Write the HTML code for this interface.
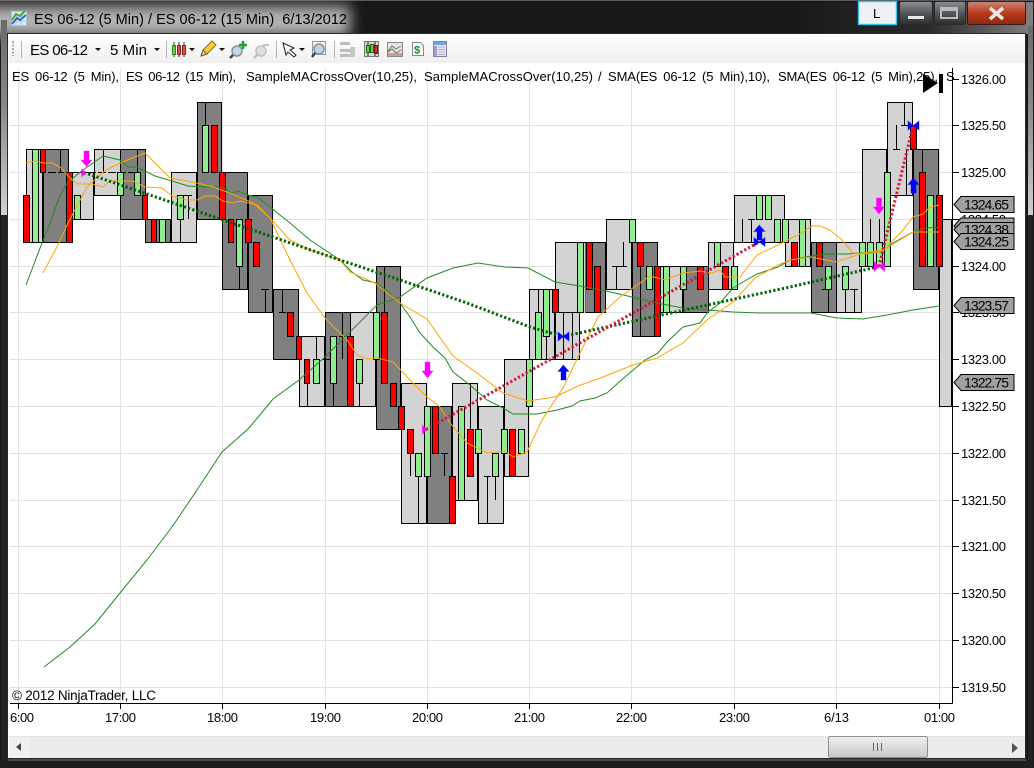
<!DOCTYPE html>
<html><head><meta charset="utf-8"><title>ES 06-12</title>
<style>
html,body{margin:0;padding:0;background:#202020;width:1034px;height:768px;overflow:hidden}
svg{display:block}
text{font-family:"Liberation Sans",Arial,sans-serif;fill:#000}
.ax text{font-size:13px}
.fl polygon{fill:#a0a0a0;stroke:#000}
.fl text{font-size:14px}
.lg text{font-size:13px;word-spacing:2.5px}
</style></head><body>
<svg width="1034" height="768" viewBox="0 0 1034 768" xmlns="http://www.w3.org/2000/svg">
<defs>
<filter id="b" x="-20%" y="-80%" width="140%" height="260%"><feGaussianBlur stdDeviation="7"/></filter>
<linearGradient id="side" x1="0" y1="0" x2="0" y2="1"><stop offset="0" stop-color="#6a6a6a"/><stop offset=".45" stop-color="#8a8a8a"/><stop offset="1" stop-color="#d0d0d0"/></linearGradient>
<linearGradient id="tr" x1="0" y1="0" x2="1" y2="0"><stop offset="0" stop-color="#1a1a1a"/><stop offset=".55" stop-color="#2a2a2a"/><stop offset="1" stop-color="#808080"/></linearGradient>
<linearGradient id="tb" x1="0" y1="0" x2="0" y2="1"><stop offset="0" stop-color="#fff"/><stop offset="1" stop-color="#efefef"/></linearGradient>
<linearGradient id="mn" x1="0" y1="0" x2="0" y2="1"><stop offset="0" stop-color="#8b8f92"/><stop offset=".5" stop-color="#55585b"/><stop offset="1" stop-color="#2a2c2e"/></linearGradient>
<linearGradient id="cl" x1="0" y1="0" x2="0" y2="1"><stop offset="0" stop-color="#c98a7a"/><stop offset=".5" stop-color="#bb3a1c"/><stop offset="1" stop-color="#8c2812"/></linearGradient>
<linearGradient id="th" x1="0" y1="0" x2="0" y2="1"><stop offset="0" stop-color="#f0f0f0"/><stop offset=".5" stop-color="#dcdcdc"/><stop offset="1" stop-color="#c8c8c8"/></linearGradient>
<clipPath id="cp"><rect x="9" y="64" width="1017" height="672"/></clipPath>
</defs>

<!-- window frame -->
<rect width="1034" height="768" fill="#1c1c1c"/>
<path d="M0 768V6Q0 0 6 0H1028Q1034 0 1034 6V768Z" fill="#171717"/>
<rect x="0" y="0" width="1034" height="1" fill="#5a5a5a"/>
<rect x="800" y="2" width="233" height="32" fill="url(#tr)"/>
<rect x="-20" y="6" width="370" height="30" fill="#b4b4b4" filter="url(#b)"/>
<rect x="1" y="20" width="6" height="195" fill="url(#side)"/>
<rect x="1" y="215" width="6" height="545" fill="#232323"/>
<rect x="1028" y="26" width="5" height="189" fill="url(#side)"/>
<rect x="1028" y="215" width="5" height="545" fill="#232323"/>
<rect x="0" y="760" width="1034" height="8" fill="#1e1e1e"/>
<rect x="7.5" y="33.5" width="1018" height="725" fill="#fff" stroke="#2a2a2a"/>
<rect x="8" y="759.500" width="1018" height="1" fill="#777"/>

<!-- title -->
<g>
<rect x="11" y="11" width="16" height="15" fill="#dde6f0" stroke="#8fa6c0"/>
<path d="M11 16H27M11 21H27M16 11V26M21 11V26" stroke="#b5c5d8" fill="none"/>
<path d="M12 24L17 18L20 20L26 15" stroke="#2a6fd0" stroke-width="2" fill="none"/>
<path d="M12 20L16 14L20 16L25 11" stroke="#4fa83a" stroke-width="2" fill="none"/>
</g>
<text x="34" y="24" font-size="14.5" textLength="313" lengthAdjust="spacing" xml:space="preserve">ES 06-12 (5 Min) / ES 06-12 (15 Min)  6/13/2012</text>

<!-- caption buttons -->
<rect x="858.5" y="1.5" width="38" height="23" fill="#eef1f5" stroke="#35c4ee" stroke-width="1.4"/>
<text x="873" y="18" font-size="13">L</text>
<rect x="899.5" y="1.5" width="33" height="23" rx="2" fill="url(#mn)" stroke="#2b2b2b"/>
<rect x="908" y="16" width="16" height="3" fill="#e8e8e8"/>
<rect x="934.5" y="1.5" width="31" height="23" rx="2" fill="url(#mn)" stroke="#2b2b2b"/>
<rect x="941" y="8" width="16" height="10" fill="none" stroke="#b8bcc0" stroke-width="2"/>
<rect x="941" y="8" width="16" height="3" fill="#b8bcc0"/>
<rect x="967.5" y="1.5" width="58" height="23" rx="2" fill="url(#cl)" stroke="#3a1a12"/>
<path d="M990 8L1003 19M1003 8L990 19" stroke="#e8e4e0" stroke-width="3.6" fill="none"/>

<!-- toolbar -->
<rect x="9" y="35" width="1016" height="28" fill="url(#tb)"/>
<path d="M13 41V56" stroke="#aaa" stroke-width="2" stroke-dasharray="2 1.5"/>
<path d="M21.5 41V58M166.5 41V58M276.5 41V58M334.5 41V58" stroke="#b4b4b4"/>
<text x="30" y="55" font-size="15" textLength="58">ES 06-12</text>
<text x="110" y="55" font-size="15" textLength="37">5 Min</text>
<path d="M95 48h6l-3 3zM154 48h6l-3 3zM189 48h6l-3 3zM219 48h6l-3 3zM299 48h6l-3 3z" fill="#111"/>
<!-- candles icon -->
<path d="M174 42V57M179 42V57M184 42V57" stroke="#333"/>
<rect x="172.500" y="45.500" width="3" height="9" fill="#62d04a" stroke="#2d8a20"/>
<rect x="177.500" y="45.500" width="3" height="9" fill="#e24a3a" stroke="#8a2a20"/>
<rect x="182.500" y="45.500" width="3" height="9" fill="#e24a3a" stroke="#8a2a20"/>
<!-- pencil -->
<path d="M201 56L203 50L212 41L216 45L207 54Z" fill="#f4d030" stroke="#8a7020"/>
<path d="M201 56L203 50L207 54Z" fill="#e8c898" stroke="#6a5a3a"/>
<!-- zoom in -->
<circle cx="237" cy="51" r="5" fill="#c4d8ee" stroke="#8a8f96" stroke-width="1.5"/>
<path d="M233 55L230 58" stroke="#444" stroke-width="2.4"/>
<path d="M243 41V49M239 45H247" stroke="#10a030" stroke-width="2.4"/>
<!-- zoom out disabled -->
<circle cx="261" cy="51" r="5" fill="#dedede" stroke="#c0c0c0" stroke-width="1.5"/>
<path d="M257 55L254 58" stroke="#bbb" stroke-width="2.4"/>
<path d="M263 45H269" stroke="#c4c4c4" stroke-width="2"/>
<!-- pointer -->
<path d="M283 43L294 48L290 50L296 55L294 57L288 52L286 55Z" fill="#fff" stroke="#222" stroke-width="1"/>
<!-- zoom box -->
<rect x="312.500" y="41.500" width="13" height="13" fill="#f4f4f4" stroke="#999"/>
<circle cx="319" cy="49" r="5" fill="#bcd4ee" stroke="#8a8f96" stroke-width="1.5"/>
<path d="M315 53L312 57" stroke="#444" stroke-width="2.4"/>
<!-- disabled panel -->
<path d="M340 42h10v3h-10zM340 49h10v3h-10zM340 54h10v3h-10z" fill="#bdbdbd"/>
<rect x="350" y="47" width="5" height="10" fill="#c8c8c8"/>
<!-- candles box -->
<rect x="364.500" y="41.500" width="14" height="15" fill="#d8d8d8" stroke="#777"/>
<path d="M368 42V56M375 42V56" stroke="#222"/>
<rect x="366.500" y="45.500" width="3" height="7" fill="#62d04a" stroke="#226a18"/>
<rect x="370.500" y="44.500" width="3" height="8" fill="#62d04a" stroke="#226a18"/>
<rect x="374.500" y="45.500" width="3" height="8" fill="#e22a20" stroke="#701810"/>
<!-- chart box -->
<rect x="387.500" y="42.500" width="15" height="14" fill="#e6e6e6" stroke="#888"/>
<path d="M388 51L392 46L396 49L401 46" stroke="#3aa04a" fill="none"/>
<path d="M388 52L392 49L396 53L401 50" stroke="#d04040" fill="none"/>
<rect x="388" y="53" width="14" height="3" fill="#aaa"/>
<!-- dollar doc -->
<path d="M412.500 42.500H420.500L423.500 45.500V55.500H412.500Z" fill="#fff" stroke="#888"/>
<text x="414" y="53.500" font-size="11" font-weight="bold" style="fill:#108a30">$</text>
<!-- table -->
<rect x="433.500" y="41.500" width="13" height="15" fill="#e8e4f4" stroke="#8a80b0"/>
<rect x="434" y="42" width="12" height="3" fill="#70a8d8"/>
<path d="M438 47H445M438 49.500H445M438 52H445M438 54.500H445" stroke="#b8b0d0"/>
<rect x="434" y="46" width="3" height="10" fill="#a898d8"/>

<g clip-path="url(#cp)">
<!-- grid -->
<path stroke="#e2e2e2" fill="none" d="M18.500 69V703M120.500 69V703M222.500 69V703M325.500 69V703M427.500 69V703M529.500 69V703M631.500 69V703M734.500 69V703M836.500 69V703M939.500 69V703
M10 125.500H952M10 172.500H952M10 219.500H952M10 266.500H952M10 312.500H952M10 359.500H952M10 406.500H952M10 453.500H952M10 500.500H952M10 546.500H952M10 593.500H952M10 640.500H952M10 687.500H952"/>

<!-- blocks -->
<g stroke="#000" stroke-width="1">
<g fill="#d3d3d3">
<rect x="26.500" y="149.500" width="17" height="93"/>
<rect x="72.500" y="172.500" width="21" height="47"/>
<rect x="94.500" y="149.500" width="26" height="46"/>
<rect x="171.500" y="172.500" width="25" height="70"/>
</g>
<g fill="#808080">
<path d="M43.500 149.500H68.500V172.500H72.500V242.500H43.500Z"/>
<rect x="120.500" y="149.500" width="25" height="70"/>
<rect x="145.500" y="219.500" width="25" height="23"/>
<path d="M197.500 102.500H221.500V172.500H247.500V289.500H222.500V219.500H197.500Z"/>
<rect x="248.500" y="195.500" width="24" height="117"/>
<rect x="273.500" y="289.500" width="25" height="70"/>
</g>
<rect x="299.500" y="336.500" width="25" height="70" fill="#d3d3d3"/>
<rect x="350.500" y="312.500" width="25" height="94" fill="#d3d3d3"/>
<rect x="325.500" y="312.500" width="25" height="94" fill="#808080"/>
<rect x="376.500" y="266.500" width="24" height="163" fill="#808080"/>
<rect x="401.500" y="383.500" width="25" height="140" fill="#d3d3d3"/>
<rect x="427.500" y="406.500" width="24" height="117" fill="#808080"/>
<rect x="452.500" y="383.500" width="25" height="117" fill="#d3d3d3"/>
<rect x="478.500" y="406.500" width="25" height="117" fill="#d3d3d3"/>
<rect x="504.500" y="359.500" width="24" height="117" fill="#d3d3d3"/>
<rect x="529.500" y="289.500" width="25" height="70" fill="#d3d3d3"/>
<rect x="585.500" y="242.500" width="20" height="70" fill="#808080"/>
<rect x="555.500" y="242.500" width="30" height="70" fill="#d3d3d3" stroke="none"/>
<path d="M585.500 242.500H555.500V312.500" fill="none"/>
<rect x="555.500" y="312.500" width="24" height="47" fill="#d3d3d3"/>
<rect x="606.500" y="219.500" width="25" height="70" fill="#d3d3d3"/>
<rect x="632.500" y="242.500" width="25" height="94" fill="#808080"/>
<rect x="658.500" y="266.500" width="24" height="46" fill="#d3d3d3"/>
<rect x="683.500" y="266.500" width="25" height="46" fill="#808080"/>
<rect x="708.500" y="242.500" width="25" height="47" fill="#d3d3d3"/>
<rect x="734.500" y="195.500" width="50" height="47" fill="#d3d3d3"/>
<rect x="785.500" y="219.500" width="25" height="47" fill="#d3d3d3"/>
<rect x="811.500" y="242.500" width="25" height="70" fill="#808080"/>
<rect x="836.500" y="242.500" width="25" height="70" fill="#d3d3d3"/>
<rect x="862.500" y="149.500" width="24" height="117" fill="#d3d3d3"/>
<rect x="887.500" y="102.500" width="25" height="93" fill="#d3d3d3"/>
<rect x="913.500" y="149.500" width="25" height="140" fill="#808080"/>
<rect x="939.500" y="219.500" width="12" height="187" fill="#d3d3d3"/>
</g>
<path d="M43 149V242" stroke="#000" stroke-width="2"/>

<!-- wicks -->
<path stroke="#000" fill="none" d="M60.500 149V172M103.500 149V172M137.500 149V172M180.500 219V242M188.500 195V219M184 195.500H192M205.500 102V125M239.500 266V289M265.500 289V312M261 289.500H269M282.500 289V312M279 312.500H286M307.500 383V406M316.500 336V359M323 359.500H330M333.500 383V406M342.500 312V359M339 336.500H346M359.500 383V406M384.500 266V312M410.500 453V476M418.500 476V523M444.500 453V476M441 453.500H448M470.500 383V429M487.500 476V523M484 476.500H491M495.500 476V500M538.500 289V312M546.500 336V359M563.500 312V359M572.500 312V359M568 312.500H576M616.500 266V289M612 266.500H620M623.500 242V266M620 266.500H627M640.500 266V336M742.500 219V242M751.500 219V242M748 219.500H755M828.500 289V312M845.500 289V312M854.500 289V312M850 289.500H858M822 289.500H832M870.500 219V242M879.500 219V242M896.500 125V149M893 149.500H900M904.500 102V125M901 125.500H909M906.500 149V195M922.500 149V172"/>
<path stroke="#000" fill="none" stroke-dasharray="8 2" d="M48 172.500H135"/>

<!-- candles -->
<g stroke="#000" fill="#f00">
<rect x="23.500" y="195.500" width="6" height="47"/><rect x="40.500" y="149.500" width="5" height="23"/><rect x="66.500" y="172.500" width="6" height="70"/><rect x="142.500" y="195.500" width="5" height="24"/><rect x="151.500" y="219.500" width="5" height="23"/><rect x="211.500" y="125.500" width="6" height="47"/><rect x="219.500" y="172.500" width="6" height="47"/><rect x="228.500" y="219.500" width="5" height="23"/><rect x="245.500" y="219.500" width="6" height="23"/><rect x="253.500" y="242.500" width="6" height="24"/><rect x="287.500" y="312.500" width="6" height="24"/><rect x="296.500" y="336.500" width="5" height="23"/><rect x="304.500" y="359.500" width="5" height="24"/><rect x="347.500" y="336.500" width="6" height="70"/><rect x="381.500" y="312.500" width="6" height="71"/><rect x="390.500" y="383.500" width="6" height="23"/><rect x="398.500" y="406.500" width="6" height="23"/><rect x="407.500" y="429.500" width="6" height="24"/><rect x="432.500" y="406.500" width="6" height="47"/><rect x="449.500" y="476.500" width="6" height="47"/><rect x="467.500" y="429.500" width="6" height="47"/><rect x="509.500" y="429.500" width="6" height="47"/><rect x="552.500" y="289.500" width="6" height="23"/><rect x="586.500" y="242.500" width="6" height="47"/><rect x="594.500" y="266.500" width="6" height="46"/><rect x="637.500" y="242.500" width="6" height="24"/><rect x="654.500" y="266.500" width="6" height="70"/><rect x="697.500" y="266.500" width="6" height="23"/><rect x="722.500" y="266.500" width="6" height="23"/><rect x="791.500" y="242.500" width="6" height="24"/><rect x="816.500" y="242.500" width="6" height="24"/><rect x="910.500" y="125.500" width="6" height="24"/><rect x="919.500" y="172.500" width="6" height="94"/><rect x="936.500" y="195.500" width="6" height="71"/>
</g>
<g stroke="#000" fill="#90ee90">
<rect x="32.500" y="149.500" width="6" height="93"/><rect x="74.500" y="195.500" width="6" height="24"/><rect x="117.500" y="172.500" width="6" height="23"/><rect x="134.500" y="172.500" width="6" height="23"/><rect x="159.500" y="219.500" width="6" height="23"/><rect x="177.500" y="195.500" width="6" height="24"/><rect x="202.500" y="125.500" width="6" height="47"/><rect x="236.500" y="219.500" width="6" height="47"/><rect x="313.500" y="359.500" width="6" height="24"/><rect x="330.500" y="336.500" width="6" height="47"/><rect x="356.500" y="359.500" width="6" height="24"/><rect x="373.500" y="312.500" width="6" height="47"/><rect x="415.500" y="453.500" width="6" height="23"/><rect x="424.500" y="406.500" width="6" height="70"/><rect x="458.500" y="406.500" width="6" height="94"/><rect x="475.500" y="429.500" width="6" height="24"/><rect x="492.500" y="453.500" width="6" height="23"/><rect x="501.500" y="429.500" width="6" height="24"/><rect x="518.500" y="429.500" width="6" height="24"/><rect x="526.500" y="359.500" width="6" height="47"/><rect x="535.500" y="312.500" width="6" height="47"/><rect x="543.500" y="289.500" width="6" height="47"/><rect x="577.500" y="242.500" width="6" height="70"/><rect x="629.500" y="219.500" width="6" height="23"/><rect x="646.500" y="266.500" width="6" height="23"/><rect x="663.500" y="266.500" width="6" height="46"/><rect x="680.500" y="266.500" width="6" height="23"/><rect x="714.500" y="242.500" width="6" height="24"/><rect x="731.500" y="266.500" width="6" height="23"/><rect x="756.500" y="195.500" width="6" height="24"/><rect x="765.500" y="195.500" width="6" height="24"/><rect x="774.500" y="219.500" width="6" height="23"/><rect x="782.500" y="219.500" width="6" height="23"/><rect x="799.500" y="219.500" width="6" height="47"/><rect x="825.500" y="266.500" width="6" height="23"/><rect x="842.500" y="266.500" width="6" height="23"/><rect x="859.500" y="242.500" width="6" height="24"/><rect x="867.500" y="242.500" width="6" height="24"/><rect x="876.500" y="242.500" width="6" height="24"/><rect x="884.500" y="172.500" width="6" height="94"/><rect x="927.500" y="195.500" width="6" height="71"/>
</g>

<!-- SMA lines -->
<g fill="none" stroke-width="1">
<polyline stroke="#228b22" points="44,667 70,647 95,624 120,593 147,560 172,527 197,490 222,452 248,429 260,415 273,399 299,380 325,357 350,332 377,305 400,297 427,278 453,268 478,263 505,267 528,268 555,282 580,286 606,291 632,297 657,303 683,308 708,310 733,312 760,313 790,313 811,313 837,318 863,319 887,315 913,310 939,306"/>
<polyline stroke="#228b22" points="26,285 42,243 52,218 60,195 68,182 83,170 103,156 120,160 128,167 137,167 155,176 172,181 188,186 205,187 222,187 232,193 238,191 248,195 257,197 270,207 290,223 310,240 325,250 340,260 352,272 363,280 377,283 388,292 400,303 410,317 420,333 433,347 445,358 453,372 470,385 487,400 503,408 513,414 537,414 557,410 572,406 580,401 595,398 607,393 618,383 632,371 645,360 658,353 667,342 683,327 700,323 708,312 720,303 733,288 743,282 757,274 778,267 790,260 811,256 828,254 847,254 860,253 880,252 893,243 913,232 927,228 940,227"/>
<polyline stroke="#ffa500" points="43,273 58,245 68,223 87,187 103,172 120,163 145,153 170,178 197,183 213,187 230,193 253,203 270,218 290,240 310,250 340,260 350,272 375,283 400,303 427,319 453,356 477,373 503,393 528,401 555,397 578,386 603,377 633,365 657,358 683,343 707,320 733,302 755,278 778,265 790,260 811,257 836,262 863,253 883,250 913,232 939,232"/>
<polyline stroke="#ffa500" points="26,163 35,161 43,163 52,163 60,167 72,180 78,184 92,184 103,187 110,181 118,181 133,181 145,187 162,188 172,196 187,200 197,200 205,196 215,196 223,201 232,203 240,201 257,205 270,218 290,260 307,293 325,318 347,340 357,355 367,359 377,358 393,362 413,383 427,397 440,407 450,423 467,443 487,453 505,451 513,457 527,452 542,420 563,388 580,353 598,317 620,297 650,276 665,280 683,273 700,271 712,273 720,270 725,277 740,277 757,255 778,245 800,234 812,226 820,226 830,230 842,240 853,253 867,254 883,251 903,230 913,217 923,214 930,207 939,205"/>
<polyline stroke="#006400" stroke-width="3" stroke-dasharray="2.200 2.200" points="84,172.500 270,236 340,260 400,280 467,303 530,327 563,336.500 790,287 879,266.500"/>
<polyline stroke="#dc143c" stroke-width="3" stroke-dasharray="2.200 2.200" points="426,429.500 759,242"/>
<polyline stroke="#dc143c" stroke-width="3" stroke-dasharray="2.200 2.200" points="879,266.500 913,126"/>
</g>

<!-- markers -->
<g fill="#f0f" stroke="#f0f" stroke-opacity=".35">
<polygon points="84,151 89,151 89,160 92,160 86.500,166.500 81,160 84,160"/>
<polygon points="425,362 430,362 430,371 433,371 427.500,378 422,371 425,371"/>
<polygon points="876.500,198 881.500,198 881.500,207 884.500,207 879,214 873.500,207 876.500,207"/>
<polygon points="81.700,168.700 86,172.700 81.700,176.700"/>
<polygon points="422.300,425 427,429.700 422.300,434.300"/>
<polygon points="874,261.500 879.300,266.500 874,271.500"/>
<polygon points="884.500,261.500 879.300,266.500 884.500,271.500"/>
</g>
<g fill="#00f" stroke="#00f" stroke-opacity=".35">
<polygon points="563.300,365 569,371.500 566,371.500 566,380 561,380 561,371.500 558,371.500"/>
<polygon points="759.300,225 765,231.500 762,231.500 762,240 757,240 757,231.500 754,231.500"/>
<polygon points="913.300,178 919,184.500 916,184.500 916,193 911,193 911,184.500 908,184.500"/>
<polygon points="558,332 563.300,336.500 558,341"/><polygon points="569,332 563.300,336.500 569,341"/>
<polygon points="754,237.500 759.300,242 754,246.500"/><polygon points="765,237.500 759.300,242 765,246.500"/>
<polygon points="908,121 913.300,125.500 908,130"/><polygon points="919,121 913.300,125.500 919,130"/>
</g>

<!-- axes -->
<path stroke="#000" fill="none" d="M952.500 68V703.500M10 703.500H952.500
M18.500 703V709M120.500 703V709M222.500 703V709M325.500 703V709M427.500 703V709M529.500 703V709M631.500 703V709M734.500 703V709M836.500 703V709M939.500 703V709
M952 79.500H959M952 125.500H959M952 172.500H959M952 219.500H959M952 266.500H959M952 312.500H959M952 359.500H959M952 406.500H959M952 453.500H959M952 500.500H959M952 546.500H959M952 593.500H959M952 640.500H959M952 687.500H959"/>

<g class="ax">
<text x="961" y="84" textLength="45">1326.00</text>
<text x="961" y="130" textLength="45">1325.50</text>
<text x="961" y="177" textLength="45">1325.00</text>
<text x="961" y="224" textLength="45">1324.50</text>
<text x="961" y="271" textLength="45">1324.00</text>
<text x="961" y="317" textLength="45">1323.50</text>
<text x="961" y="364" textLength="45">1323.00</text>
<text x="961" y="411" textLength="45">1322.50</text>
<text x="961" y="458" textLength="45">1322.00</text>
<text x="961" y="505" textLength="45">1321.50</text>
<text x="961" y="551" textLength="45">1321.00</text>
<text x="961" y="598" textLength="45">1320.50</text>
<text x="961" y="645" textLength="45">1320.00</text>
<text x="961" y="692" textLength="45">1319.50</text>
<text x="10" y="722" textLength="24">6:00</text>
<text x="105" y="722" textLength="31">17:00</text>
<text x="207" y="722" textLength="31">18:00</text>
<text x="310" y="722" textLength="31">19:00</text>
<text x="412" y="722" textLength="31">20:00</text>
<text x="514" y="722" textLength="31">21:00</text>
<text x="616" y="722" textLength="31">22:00</text>
<text x="719" y="722" textLength="31">23:00</text>
<text x="824" y="722" textLength="25">6/13</text>
<text x="924" y="722" textLength="31">01:00</text>
</g>

<!-- price flags -->
<g class="fl">
<polygon points="954,204.500 961,196.500 1014,196.500 1014,212.500 961,212.500"/>
<text x="964" y="209.500" textLength="45">1324.65</text>
<polygon points="954,226 961,218 1014,218 1014,234 961,234"/>
<polygon points="954,229.500 961,222.500 1014,222.500 1014,237.500 961,237.500"/>
<text x="964" y="234.500" textLength="45">1324.38</text>
<polygon points="954,241.500 961,233.500 1014,233.500 1014,249.500 961,249.500"/>
<text x="964" y="246.500" textLength="45">1324.25</text>
<polygon points="954,305.500 961,297.500 1014,297.500 1014,313.500 961,313.500"/>
<text x="964" y="310.500" textLength="45">1323.57</text>
<polygon points="954,382.500 961,374.500 1014,374.500 1014,390.500 961,390.500"/>
<text x="964" y="387.500" textLength="45">1322.75</text>
</g>

<!-- legend -->
<g class="lg">
<text x="12" y="81" textLength="107">ES 06-12 (5 Min),</text>
<text x="126" y="81" textLength="110">ES 06-12 (15 Min),</text>
<text x="246" y="81" textLength="171">SampleMACrossOver(10,25),</text>
<text x="424" y="81" textLength="169">SampleMACrossOver(10,25)</text>
<text x="598" y="81">/</text>
<text x="608" y="81" textLength="162">SMA(ES 06-12 (5 Min),10),</text>
<text x="778" y="81" textLength="160">SMA(ES 06-12 (5 Min),25),</text>
<text x="946" y="81">S</text>
</g>
<path d="M923 74L938 83L923 93Z" fill="#000"/>
<rect x="939" y="74" width="4" height="19" fill="#000"/>
<text x="12" y="700" font-size="13.5" textLength="144">© 2012 NinjaTrader, LLC</text>
</g>

<!-- scrollbar -->
<rect x="9" y="736" width="1016" height="22" fill="#ececec"/>
<rect x="9" y="736" width="1016" height="1" fill="#e2e2e2"/>
<rect x="9" y="737" width="21" height="21" fill="#f0f0f0"/>
<path d="M21 743V751L16 747Z" fill="#444"/>
<path d="M1012 743V753L1018 748Z" fill="#555"/>
<rect x="828.500" y="736.500" width="99" height="21" rx="2" fill="url(#th)" stroke="#8f8f8f"/>
<path d="M873.500 743V751M877.500 743V751M881.500 743V751" stroke="#666"/>
</svg>
</body></html>
